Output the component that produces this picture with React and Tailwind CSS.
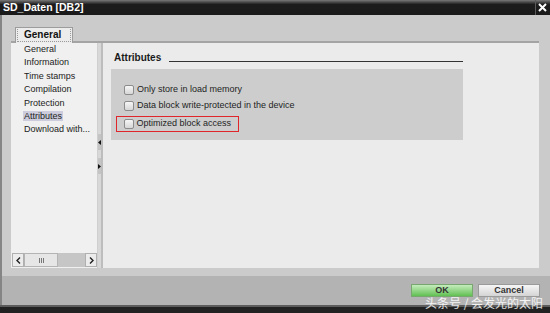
import React from 'react';

const navItems = ['General', 'Information', 'Time stamps', 'Compilation', 'Protection', 'Attributes', 'Download with...'];

function CheckBox() {
  return (
    <span className="w-[10px] h-[10px] shrink-0 rounded-[2px] border border-[#8c8c8c] bg-gradient-to-b from-[#f6f6f6] to-[#d6d6d6]" />
  );
}

function SplitMarker({ dir }) {
  return (
    <div className="h-[16px] bg-[#c4c4c4] flex items-center justify-center">
      <svg width="3" height="5" viewBox="0 0 3 5">
        {dir === 'left' ? <path d="M3 0 L0 2.5 L3 5 Z" fill="#111" /> : <path d="M0 0 L3 2.5 L0 5 Z" fill="#111" />}
      </svg>
    </div>
  );
}

export default function App() {
  return (
    <div className="relative w-[550px] h-[313px] overflow-hidden bg-[#cbcbcb] flex flex-col text-[#222]" style={{ fontFamily: '"Liberation Sans", Arial, sans-serif' }}>
      {/* title bar */}
      <div className="h-[15px] shrink-0 flex items-stretch bg-gradient-to-b from-[#7a7a7a] via-[#1c1c1c] via-30% to-[#1a1a1a]">
        <div className="flex-1 pl-[3px] text-white font-bold text-[10.5px] leading-[15px]">SD_Daten [DB2]</div>
        <div className="w-[14px] border-l border-[#5a5a5a] flex items-center justify-center mr-[1px]">
          <svg width="9" height="9" viewBox="0 0 9 9">
            <path d="M1 1 L8 8 M8 1 L1 8" stroke="#fff" strokeWidth="2" />
          </svg>
        </div>
      </div>

      {/* body */}
      <div className="flex-1 flex flex-col border-l-2 border-[#858585] pl-[9px] pr-[11px] pt-[12px]">
        <div className="flex">
          <div className="relative z-10 ml-[4px] w-[58px] h-[16px] -mb-[2px] bg-[#ececec] border border-b-0 border-[#9c9c9c] p-[1px]">
            <div className="h-full border border-dotted border-[#9a9a9a] border-t-0 pl-[6px] font-bold text-[10px] leading-[12px] text-[#111]">General</div>
          </div>
        </div>
        <div className="h-[227px] shrink-0 flex border-t-2 border-[#a4a4a4] bg-[#ebebeb]">
          {/* nav */}
          <div className="w-[86px] shrink-0 flex flex-col bg-[#f0f0f0]">
            <div className="flex-1 text-[9px]">
              {navItems.map((item) => (
                <div key={item} className="h-[13.4px] leading-[13.4px] pl-[12px]">
                  <span className={item === 'Attributes' ? 'bg-[#ccccdc] px-[1px]' : 'px-[1px]'}>{item}</span>
                </div>
              ))}
            </div>
            <div className="h-[14px] shrink-0 mb-[1px] ml-[1px] flex bg-[#c6c6c6]">
              <div className="w-[12px] shrink-0 bg-[#ececec] border border-[#b0b0b0] flex items-center justify-center">
                <svg width="5" height="7" viewBox="0 0 5 7"><path d="M4 0.5 L1 3.5 L4 6.5" stroke="#222" strokeWidth="1.4" fill="none" /></svg>
              </div>
              <div className="w-[34px] shrink-0 bg-[#e6e6e6] border border-[#b4b4b4] flex items-center justify-center gap-[1px]">
                <span className="w-[1px] h-[5px] bg-[#777]" />
                <span className="w-[1px] h-[5px] bg-[#777]" />
                <span className="w-[1px] h-[5px] bg-[#777]" />
              </div>
              <div className="flex-1" />
              <div className="w-[12px] shrink-0 bg-[#ececec] border border-[#b0b0b0] flex items-center justify-center">
                <svg width="5" height="7" viewBox="0 0 5 7"><path d="M1 0.5 L4 3.5 L1 6.5" stroke="#222" strokeWidth="1.4" fill="none" /></svg>
              </div>
            </div>
          </div>

          {/* splitter */}
          <div className="w-[6px] shrink-0 flex border-l border-[#cfcfcf]">
            <div className="w-[3px] bg-[#d8d8d8] flex flex-col pt-[91px] gap-[8px]">
              <SplitMarker dir="left" />
              <SplitMarker dir="right" />
            </div>
            <div className="w-[2px] bg-[#bdbdbd]" />
          </div>

          {/* content */}
          <div className="flex-1 pt-[9px]">
            <div className="ml-[11px] w-[349px] flex items-end">
              <span className="font-bold text-[10px] leading-[12px] text-[#1a1a1a]">Attributes</span>
              <span className="flex-1 ml-[8px] mb-[2px] h-[1px] bg-[#333]" />
            </div>
            <div className="ml-[8px] mt-[5px] w-[352px] h-[71px] bg-[#cdcdcd] pt-[13px] pl-[13px] text-[9px] text-[#1e1e1e]">
              <div className="h-[16px] flex items-center gap-[3px]">
                <CheckBox />
                <span>Only store in load memory</span>
              </div>
              <div className="h-[16px] flex items-center gap-[3px]">
                <CheckBox />
                <span>Data block write-protected in the device</span>
              </div>
              <div className="-ml-[8px] mt-[2px] w-[123px] h-[16px] border-[1.5px] border-[#e0262a] pl-[6.5px] flex items-center gap-[3px]">
                <CheckBox />
                <span>Optimized block access</span>
              </div>
            </div>
          </div>
        </div>
      </div>

      {/* footer */}
      <div className="h-[29px] shrink-0 bg-[#b3b3b3] border-l-2 border-[#858585] flex justify-end items-start pt-[8px] pr-[10px] gap-[5px] text-[9px] font-bold">
        <div className="w-[62px] h-[13px] border border-[#78a870] bg-gradient-to-b from-[#c4ecbc] to-[#5fc050] flex items-center justify-center text-[#333]">OK</div>
        <div className="w-[62px] h-[13px] border border-[#9a9a9a] bg-gradient-to-b from-[#f6f6f6] to-[#d4d4d4] flex items-center justify-center text-[#333]">Cancel</div>
      </div>
      <div className="h-[8px] shrink-0 border-t-2 border-[#5c5c5c] bg-[#222]" />

      <div className="absolute left-[425px] top-[295px] whitespace-nowrap text-[12px] leading-[15px] text-white/85" style={{ fontFamily: '"Noto Sans CJK SC", sans-serif' }}>
        头条号 / 会发光的太阳
      </div>
    </div>
  );
}
